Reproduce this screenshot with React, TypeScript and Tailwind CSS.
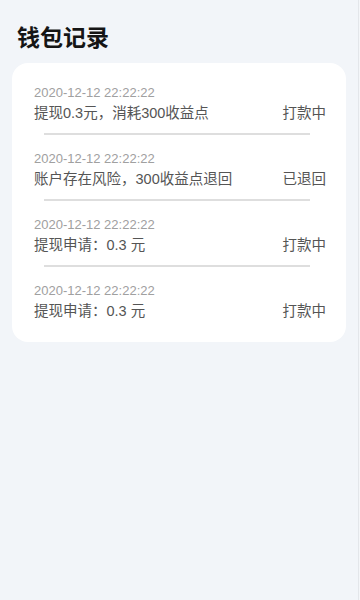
const records = [
  { time: '2020-12-12 22:22:22', text: '提现0.3元，消耗300收益点', status: '打款中' },
  { time: '2020-12-12 22:22:22', text: '账户存在风险，300收益点退回', status: '已退回' },
  { time: '2020-12-12 22:22:22', text: '提现申请：0.3 元', status: '打款中' },
  { time: '2020-12-12 22:22:22', text: '提现申请：0.3 元', status: '打款中' },
]

export default function App() {
  return (
    <div
      className="flex h-[600px] w-[360px] bg-[#f2f5f9]"
      style={{ fontFamily: '"Liberation Sans", "Noto Sans CJK SC", sans-serif' }}
    >
      <div className="flex-1 flex flex-col">
        {/* Title */}
        <h1 className="pl-[17px] pt-[24px] text-[23px] font-bold leading-[28px] text-[#151515]">
          钱包记录
        </h1>

        {/* Records card */}
        <div className="mx-[12px] mt-[11px] w-[334px] rounded-[16px] bg-white pl-[22px] pr-[20px] pt-[22px] pb-[21px]">
          {records.map((r, i) => (
            <div key={i} className="flex flex-col">
              <div className="text-[13px] leading-[16px] text-[#a0a0a0]">{r.time}</div>
              <div className="mt-[2px] flex items-center justify-between text-[14.5px] leading-[20px] text-[#555555]">
                <span>{r.text}</span>
                <span>{r.status}</span>
              </div>
              {i < records.length - 1 && (
                <div className="ml-[10px] mr-[16px] mt-[10px] mb-[16px] h-[2px] bg-[#dedede]" />
              )}
            </div>
          ))}
        </div>
      </div>
      <div className="w-[5px] border-l border-[#e3e6ea] bg-[#f4f6f9]" />
    </div>
  )
}
